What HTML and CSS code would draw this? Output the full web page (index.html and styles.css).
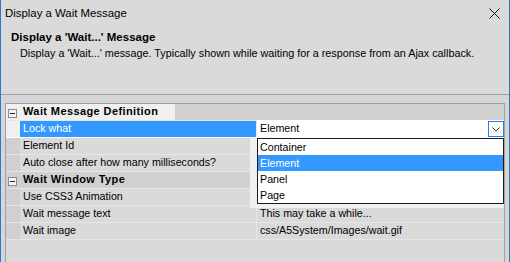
FILE: index.html
```html
<!DOCTYPE html>
<html lang="en">
<head>
  <meta charset="UTF-8">
  <title>Display a Wait Message</title>
  <link rel="stylesheet" href="styles.css">
</head>
<body>
  <div class="window">
    <div class="titlebar">
      <span>Display a Wait Message</span>
      <svg class="close" width="11" height="11" viewBox="0 0 11 11">
        <path d="M0.5 0.5 L10.5 10.5 M10.5 0.5 L0.5 10.5" stroke="#111" stroke-width="1" fill="none"/>
      </svg>
    </div>

    <div class="header">
      <div class="header-title">Display a 'Wait...' Message</div>
      <div class="header-desc">Display a 'Wait...' message. Typically shown while waiting for a response from an Ajax callback.</div>
    </div>

    <div class="panel">
      <div class="grid">
        <div class="row category ghost">
          <span class="gutter"><span class="toggle"></span></span>
          <span class="cat-name">Wait Message Definition</span>
        </div>
        <div class="row selected">
          <span class="gutter"></span>
          <span class="name">Lock what</span>
          <span class="value editing">
            Element
            <span class="drop-btn">
              <svg width="14" height="14" viewBox="0 0 14 14">
                <polyline points="3.5,5.5 7,9 10.5,5.5" stroke="#333" stroke-width="1" fill="none"/>
              </svg>
            </span>
          </span>
        </div>
        <div class="row">
          <span class="gutter"></span>
          <span class="name">Element Id</span>
          <span class="value"></span>
        </div>
        <div class="row">
          <span class="gutter"></span>
          <span class="name">Auto close after how many milliseconds?</span>
          <span class="value"></span>
        </div>
        <div class="row category">
          <span class="gutter"><span class="toggle"></span></span>
          <span class="cat-name">Wait Window Type</span>
        </div>
        <div class="row">
          <span class="gutter"></span>
          <span class="name">Use CSS3 Animation</span>
          <span class="value"></span>
        </div>
        <div class="row">
          <span class="gutter"></span>
          <span class="name">Wait message text</span>
          <span class="value">This may take a while...</span>
        </div>
        <div class="row">
          <span class="gutter"></span>
          <span class="name">Wait image</span>
          <span class="value">css/A5System/Images/wait.gif</span>
        </div>

        <!-- open dropdown of "Lock what" -->
        <div class="popup">
          <ul class="drop-list">
            <li>Container</li>
            <li class="active">Element</li>
            <li>Panel</li>
            <li>Page</li>
          </ul>
        </div>
      </div>
    </div>
  </div>
</body>
</html>
```

FILE: styles.css
```css
* {
  box-sizing: border-box;
}
body {
  margin: 0;
  font-family: "Liberation Sans", Arial, sans-serif;
  color: #000;
}
.window {
  width: 510px;
  height: 262px;
  overflow: hidden;
  background-color: #dadada;
  border-left: 1px solid #2b78d0;
  border-right: 1px solid #2b78d0;
  display: flex;
  flex-direction: column;
}
.titlebar {
  height: 26px;
  flex: none;
  display: flex;
  align-items: center;
  justify-content: space-between;
  padding: 0 9px 0 4px;
  font-size: 11.4px;
}
.header {
  height: 69px;
  flex: none;
  padding: 3px 0 0 10px;
  border-bottom: 1px solid #a0a0a0;
}
.header-title {
  font-weight: bold;
  font-size: 11.5px;
  line-height: 16px;
}
.header-desc {
  font-size: 10.8px;
  line-height: 16px;
  padding-left: 9px;
}
.panel {
  flex: 1;
  display: flex;
  padding: 8px 4px 0 4px;
  background-color: #d6d6d6;
}
.grid {
  flex: 1;
  position: relative;
  border: 1px solid #a0a0a0;
  border-bottom: none;
  background-color: #dadada;
  font-size: 10.7px;
}
.row {
  display: flex;
  height: 17px;
  line-height: 15px;
  border-bottom: 1px solid #e6e6e6;
}
.gutter {
  width: 14px;
  flex: none;
  background-color: #d0d0d0;
}
.name {
  width: 237px;
  flex: none;
  padding-left: 3px;
  border-right: 1px solid #e6e6e6;
  white-space: nowrap;
}
.value {
  flex: 1;
  padding-left: 3px;
  white-space: nowrap;
}
.category {
  background-color: #d0d0d0;
}
.category .cat-name {
  padding-left: 3px;
  font-weight: bold;
  font-size: 11px;
  letter-spacing: 0.4px;
}
.ghost {
  background: linear-gradient(to right, #f0f0f0 169px, #d0d0d0 169px);
}
.ghost .gutter {
  background-color: transparent;
}
.toggle {
  display: block;
  position: relative;
  width: 9px;
  height: 9px;
  margin: 5px 0 0 2px;
  border: 1px solid #8c8c8c;
  background-color: #f4f4f4;
}
.toggle::after {
  content: "";
  position: absolute;
  left: 1px;
  top: 3px;
  width: 5px;
  height: 1px;
  background-color: #222;
}
.selected {
  border-bottom-color: #fff;
}
.selected .gutter {
  background-color: #f0f0f0;
}
.selected .name {
  background-color: #3399ff;
  color: #fff;
}
.value.editing {
  display: flex;
  justify-content: space-between;
  background-color: #fff;
  box-shadow: 0 -1px #fff;
}
.drop-btn {
  width: 16px;
  height: 16px;
  border: 1px solid #2f7fd6;
  background-color: #fff;
  display: flex;
  align-items: center;
  justify-content: center;
}
.popup {
  position: absolute;
  left: 244px;
  top: 34px;
  width: 254px;
  height: 70px;
  background-color: #f0f0f0;
}
.drop-list {
  list-style-type: none;
  margin: 0 0 0 7px;
  padding: 0;
  width: 247px;
  height: 66px;
  border: 1px solid #1a1a1a;
  background-color: #fff;
}
.drop-list li {
  height: 16px;
  line-height: 16px;
  padding-left: 2px;
}
.drop-list li.active {
  background-color: #3399ff;
  color: #fff;
}
```
